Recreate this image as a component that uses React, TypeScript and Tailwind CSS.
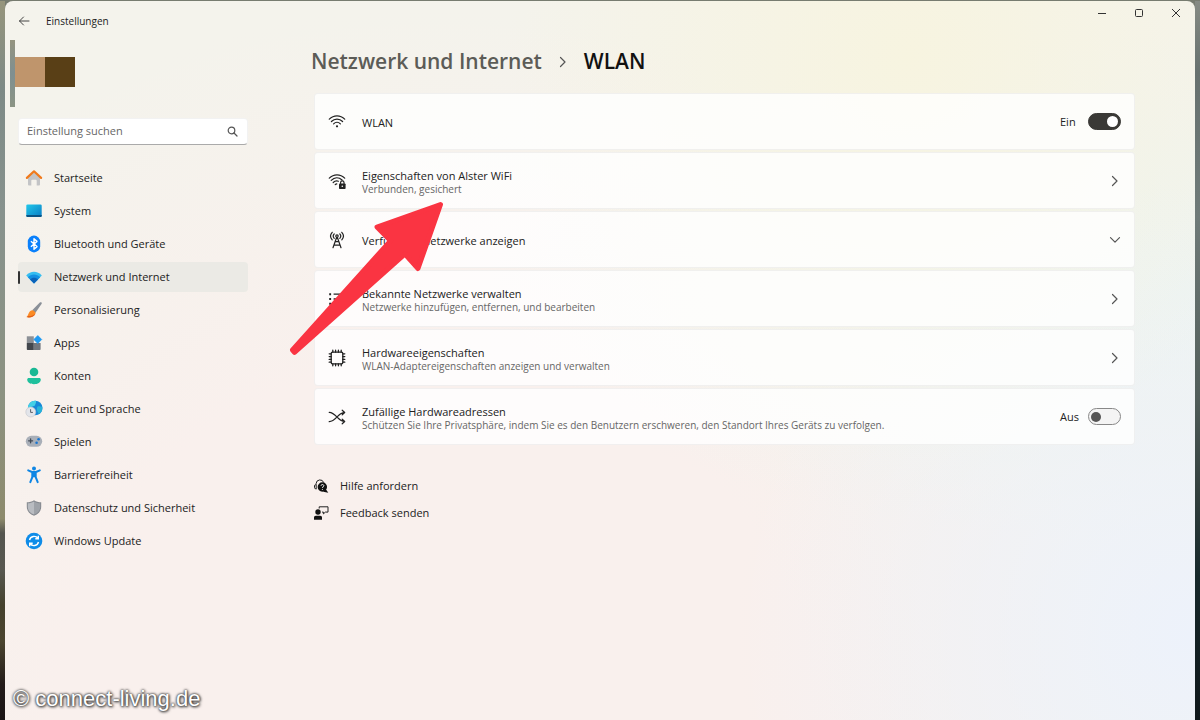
import type { ReactNode } from 'react';

const HomeIcon = () => (
    <svg width="18" height="18" viewBox="0 0 18 18">
        <path d="M3 7.5 9 2.8l6 4.7v8a.9.9 0 0 1-.9.9h-2.4v-4.6a1 1 0 0 0-1-1H7.3a1 1 0 0 0-1 1v4.6H3.9a.9.9 0 0 1-.9-.9z" fill="#c3c4c6" />
        <path d="M1.9 8.9 9 2.3l7.1 6.6" fill="none" stroke="#f07a1c" strokeWidth="2.2" strokeLinecap="round" strokeLinejoin="round" />
    </svg>
);

const SystemIcon = () => (
    <svg width="18" height="18" viewBox="0 0 18 18">
        <defs>
            <linearGradient id="screen" x1="0" y1="0" x2="1" y2="1">
                <stop offset="0" stopColor="#22c8ea" />
                <stop offset="1" stopColor="#0a7cc4" />
            </linearGradient>
        </defs>
        <rect x="1.3" y="2.5" width="15.4" height="12.4" rx="1.2" fill="url(#screen)" />
        <path d="M1.3 12.9h15.4v.8a1.2 1.2 0 0 1-1.2 1.2h-13a1.2 1.2 0 0 1-1.2-1.2z" fill="#0b5484" />
    </svg>
);

const BluetoothIcon = () => (
    <svg width="18" height="18" viewBox="0 0 18 18">
        <rect x="2.8" y=".6" width="12.4" height="16.8" rx="6.2" fill="#0a80fb" />
        <path d="m5.9 6.2 6.1 5.4-3 2.6V3.8l3 2.6-6.1 5.4" fill="none" stroke="#fff" strokeWidth="1.4" strokeLinejoin="round" />
    </svg>
);

const NetworkIcon = () => (
    <svg width="18" height="18" viewBox="0 0 18 18">
        <path d="M9 15.6 1.2 7.5C5.4 2.6 12.6 2.6 16.8 7.5z" fill="#35bdf0" />
        <path d="M9 15.6 2.8 9.200c3.400-3.600 9-3.600 12.400 0z" fill="#1490e2" />
        <path d="m9 15.6-4-4.200c2.200-2.200 5.800-2.200 8 0z" fill="#0b62b8" />
    </svg>
);

const BrushIcon = () => (
    <svg width="18" height="18" viewBox="0 0 18 18">
        <path d="M16.5 1.4c.5.4.3 1.1 0 1.6l-6.2 8.9-3.1-2.7 7.6-7.600c.5-.4 1.200-.6 1.700-.2z" fill="#8a9098" />
        <path d="M7 9.200c2 .2 3.400 1.500 3.500 3.200-1.400 3.400-5.200 4.600-9.100 3.700C3.900 14.600 3 10 7 9.200z" fill="#fb8b24" />
        <path d="M1.400 16.100c3.900.9 7.700-.3 9.100-3.700-3 2.500-5.400 3-7.500 2.500-.5.600-1 .9-1.600 1.200z" fill="#e2601a" />
    </svg>
);

const AppsIcon = () => (
    <svg width="18" height="18" viewBox="0 0 18 18">
        <path d="M1.800 2.300h7V9h-7z" fill="#8c9096" />
        <path d="M1.800 9h7v7H2.600a.8.8 0 0 1-.8-.8z" fill="#43474d" />
        <path d="M8.800 9h6.800v6.200a.8.8 0 0 1-.8.8h-6z" fill="#72777e" />
        <path d="m12.800 1.600 3.900 3.900-3.900 3.900-3.900-3.900z" fill="#1f9af2" stroke="#1f9af2" strokeWidth=".8" strokeLinejoin="round" />
    </svg>
);

const AccountIcon = () => (
    <svg width="18" height="18" viewBox="0 0 18 18">
        <circle cx="9" cy="5" r="4.300" fill="#1ab894" />
        <path d="M4 10.900h10c1.200 0 1.800.7 1.800 1.600 0 3-3 4.700-6.800 4.700s-6.800-1.700-6.800-4.700c0-.9.600-1.600 1.800-1.600z" fill="#1fc09c" />
    </svg>
);

const TimeIcon = () => (
    <svg width="18" height="18" viewBox="0 0 18 18">
        <circle cx="10.200" cy="8" r="7.300" fill="#1689d8" />
        <path d="M4 4.200A7.300 7.300 0 0 1 11 .8c.6 2-.8 3-1 4.600-1.500 1-3.500.6-4.600 2.600-1.200 0-2.300.2-2.500-.6 0-1 .4-2.200 1.100-3.200z" fill="#43cfe6" />
        <path d="M12.500 6.500c2-.6 3 0 4.700.2a7.300 7.300 0 0 1-3.200 7.300c-1.500-2-3-5-1.500-7.500z" fill="#27b3d8" />
        <circle cx="5.800" cy="12" r="5" fill="#e3e5ea" stroke="#b8bcc4" strokeWidth=".5" />
        <path d="M5.600 9.200v3.200h2.300" fill="none" stroke="#5a606a" />
    </svg>
);

const GamingIcon = () => (
    <svg width="18" height="18" viewBox="0 0 18 18">
        <rect x=".8" y="2.800" width="16.400" height="11" rx="5.500" fill="#a9afb8" />
        <path d="M5.600 5.800v4M3.600 7.800h4" stroke="#444c58" strokeWidth="1.300" strokeLinecap="round" />
        <circle cx="13.600" cy="6.300" r="1.300" fill="#1775d2" />
        <circle cx="11.600" cy="9.800" r="1.300" fill="#1775d2" />
    </svg>
);

const AccessIcon = () => (
    <svg width="18" height="18" viewBox="0 0 18 18">
        <circle cx="9" cy="2.600" r="2" fill="#0f86e4" />
        <path d="M3.200 4.300 7 6h4l3.800-1.700M9 6.300v4M7.300 6.800v4.300l-2 5M10.700 6.800v4.300l2 5" fill="none" stroke="#0f86e4" strokeWidth="2" strokeLinecap="round" strokeLinejoin="round" />
    </svg>
);

const ShieldIcon = () => (
    <svg width="18" height="18" viewBox="0 0 18 18">
        <path d="M9 1.200c2.200 1.600 4.600 2 7.200 2.100v4.500c0 4.300-2.700 7.300-7.200 8.900-4.500-1.600-7.200-4.600-7.200-8.900V3.300C4.400 3.200 6.800 2.800 9 1.200z" fill="#85898f" />
        <path d="M9 2.400c1.900 1.200 4 1.700 6.200 1.900v3.500c0 3.700-2.300 6.300-6.200 7.800z" fill="#9ea2a8" />
        <path d="M9 2.400v13.200c-3.900-1.500-6.200-4.100-6.200-7.800V4.300C5 4.100 7.100 3.600 9 2.400z" fill="#b9bcc1" />
    </svg>
);

const UpdateIcon = () => (
    <svg width="18" height="18" viewBox="0 0 18 18">
        <circle cx="9" cy="9" r="8.300" fill="#0f8ce8" />
        <path d="M4.500 8A4.700 4.700 0 0 1 13 6.500M13.500 10A4.700 4.700 0 0 1 5 11.500M13.300 3.800v3h-3M4.700 14.200v-3h3" fill="none" stroke="#fff" strokeWidth="1.400" />
    </svg>
);

const WifiIcon = () => (
    <svg width="18" height="18" viewBox="0 0 18 18" fill="none" stroke="#222" strokeWidth="1.200" strokeLinecap="round">
        <path d="M1.300 6.200c4.300-4.500 11.100-4.500 15.400 0M3.400 8.500c3.200-3.300 8-3.300 11.200 0M5.600 10.900c2-2 4.800-2 6.800 0" />
        <circle cx="9" cy="13.300" r="1.100" fill="#222" stroke="none" />
    </svg>
);

const WifiLockIcon = () => (
    <svg width="18" height="18" viewBox="0 0 18 18" fill="none" stroke="#222" strokeWidth="1.200" strokeLinecap="round">
        <path d="M1.300 6.200c4.300-4.500 11.100-4.500 15.400 0M3.200 8.400c3.200-3.300 7.600-3.400 10.900-.4M5.200 10.500c1.500-1.500 3.400-1.900 5.200-1.300M7.200 12.600c.5-.5 1-.7 1.600-.8" />
        <rect x="11" y="11.400" width="6.600" height="5.600" rx=".8" fill="#222" stroke="none" />
        <path d="M12.600 11.400v-.8a1.700 1.700 0 0 1 3.400 0v.8" />
        <circle cx="14.300" cy="14.200" r=".8" fill="#fff" stroke="none" />
    </svg>
);

const AntennaIcon = () => (
    <svg width="18" height="18" viewBox="0 0 18 18" fill="none" stroke="#222" strokeWidth="1.200" strokeLinecap="round" strokeLinejoin="round">
        <path d="M4.200 1.300c-2 2.200-2 5.300 0 7.500M13.800 1.300c2 2.200 2 5.300 0 7.500M6.200 2.900c-1.200 1.300-1.200 3.100 0 4.400M11.800 2.900c1.200 1.300 1.200 3.100 0 4.400" />
        <circle cx="9" cy="5.100" r="1.200" />
        <path d="M8.600 6.500 5 16.700M9.400 6.500 13 16.700M7.200 10.600h3.600M5.900 14.200h6.200" />
    </svg>
);

const ListIcon = () => (
    <svg width="18" height="18" viewBox="0 0 18 18" fill="none" stroke="#222" strokeWidth="1.300">
        <path d="M1.200 4.200h1.900M1.200 9h1.900M1.200 13.800h1.900" strokeWidth="1.900" />
        <path d="M5.600 4.200h11.200M5.600 9h11.200M5.600 13.800h11.200" />
    </svg>
);

const ChipIcon = () => (
    <svg width="18" height="18" viewBox="0 0 18 18" fill="none" stroke="#222" strokeWidth="1.300" strokeLinecap="round">
        <rect x="3.200" y="3.200" width="11.600" height="11.600" rx="1.200" />
        <path d="M4.800 1.200v2M7.600 1.200v2M10.400 1.200v2M13.200 1.200v2M4.800 14.800v2M7.600 14.800v2M10.400 14.800v2M13.200 14.800v2M1.200 4.800h2M1.200 7.600h2M1.200 10.400h2M1.200 13.200h2M14.800 4.800h2M14.800 7.600h2M14.800 10.400h2M14.800 13.200h2" />
    </svg>
);

const ShuffleIcon = () => (
    <svg width="18" height="18" viewBox="0 0 18 18" fill="none" stroke="#222" strokeWidth="1.200" strokeLinecap="round" strokeLinejoin="round">
        <path d="M1.200 4.300c3.600.2 5.800 2.600 7.800 4.700s3.600 4.300 7.600 4.500M1.200 13.700C4.800 13.500 7 11.100 9 9s3.600-4.300 7.600-4.500M14.200 2.200l2.500 2.300-2.500 2.300M14.200 11.200l2.500 2.300-2.500 2.300" />
    </svg>
);

const HelpIcon = () => (
    <svg width="15" height="15" viewBox="0 0 15 15">
        <path d="M2.100 9.600H1.400A1 1 0 0 1 .5 8.600V6.800a1 1 0 0 1 1-1h.6V4.600a3.900 3.900 0 0 1 7.600-1M2.200 5.800v4.500" fill="none" stroke="#222" />
        <path d="M8.400 3.300a4.700 4.700 0 1 1-.1 9.400 4.700 4.700 0 0 1 .1-9.400zm3.300 6.700 2.600 3.700-5-1z" fill="#111" />
        <path d="M7 6.800c.1-1.800 2.900-1.700 2.800 0 0 1-1.400 1-1.400 2.100M8.400 10.100v.8" fill="none" stroke="#fff" />
    </svg>
);

const FeedbackIcon = () => (
    <svg width="15" height="15" viewBox="0 0 15 15">
        <circle cx="4" cy="6" r="2.700" fill="#111" />
        <path d="M0 13.800v-2.200c0-1 .7-1.800 1.800-1.800h4.400c1.100 0 1.800.8 1.800 1.800v2.200z" fill="#111" />
        <path d="M5.200 2.500V.8H14v5.300h-2.600l-2 1.800V6.100H8" fill="none" stroke="#222" />
    </svg>
);

const Chevron = ({ down = false }: { down?: boolean }) => (
    <svg width="12" height="12" viewBox="0 0 12 12" fill="none" stroke="#555" strokeWidth="1.200" strokeLinecap="round" strokeLinejoin="round">
        <path d={down ? 'M1.500 3.700 6 8.200l4.500-4.500' : 'M3.500 1.500 8 6l-4.500 4.500'} />
    </svg>
);

const navItems = [
    { label: 'Startseite', icon: <HomeIcon /> },
    { label: 'System', icon: <SystemIcon /> },
    { label: 'Bluetooth und Geräte', icon: <BluetoothIcon /> },
    { label: 'Netzwerk und Internet', icon: <NetworkIcon />, active: true },
    { label: 'Personalisierung', icon: <BrushIcon /> },
    { label: 'Apps', icon: <AppsIcon /> },
    { label: 'Konten', icon: <AccountIcon /> },
    { label: 'Zeit und Sprache', icon: <TimeIcon /> },
    { label: 'Spielen', icon: <GamingIcon /> },
    { label: 'Barrierefreiheit', icon: <AccessIcon /> },
    { label: 'Datenschutz und Sicherheit', icon: <ShieldIcon /> },
    { label: 'Windows Update', icon: <UpdateIcon /> },
];

const cardClass = 'flex items-center w-full h-[57px] pl-[13px] pr-[13px] gap-4 rounded-sm bg-white/80 border border-black/5 text-left';

const CardText = ({ icon, title, hint }: { icon: ReactNode, title: string, hint?: string }) => (
    <>
        {icon}
        <span className="flex-1 flex flex-col pt-[2px]">
            <span className="text-[11px] leading-[15px]">{title}</span>
            {hint && <span className="text-[10px] leading-[13px] text-[#666]">{hint}</span>}
        </span>
    </>
);

const LinkCard = ({ icon, title, hint, down }: { icon: ReactNode, title: string, hint?: string, down?: boolean }) => (
    <button className={cardClass}>
        <CardText icon={icon} title={title} hint={hint} />
        <Chevron down={down} />
    </button>
);

const SwitchCard = ({ icon, title, hint, on }: { icon: ReactNode, title: string, hint?: string, on: boolean }) => (
    <label className={cardClass}>
        <CardText icon={icon} title={title} hint={hint} />
        <span className="flex items-center">
            <span className="w-7 text-[11px] leading-[15px]">{on ? 'Ein' : 'Aus'}</span>
            <input
                type="checkbox"
                role="switch"
                defaultChecked={on}
                className="appearance-none flex items-center w-[33px] h-[17px] px-[2px] rounded-full border border-[#888] bg-[#f4f4f4] before:block before:size-[10px] before:rounded-full before:bg-[#555] checked:justify-end checked:border-[#3a3936] checked:bg-[#3a3936] checked:before:size-[11px] checked:before:bg-white"
            />
        </span>
    </label>
);

const Sidebar = () => (
    <aside className="w-[243px] shrink-0 pl-[5px]">
        <div className="flex items-start h-[67px]">
            <div className="w-[5px] h-full bg-linear-to-b from-[#94947f] via-[#7f8f90] to-[#8b9484]" />
            <div className="flex mt-[17px]">
                <div className="size-[30px] bg-[#bf956c]" />
                <div className="size-[30px] bg-[#593f16]" />
            </div>
        </div>

        <div className="pl-2">
            <div className="flex items-center h-[27px] mt-[11px] px-2 rounded-sm bg-white border border-black/5 border-b-[#aaa]">
                <input type="search" aria-label="Einstellung suchen" placeholder="Einstellung suchen" className="flex-1 min-w-0 bg-transparent text-[11px] outline-none placeholder:text-[#666]" />
                <svg width="12" height="12" viewBox="0 0 12 12" fill="none" stroke="#555" strokeWidth="1.200" strokeLinecap="round">
                    <circle cx="4.500" cy="4.500" r="3.300" />
                    <path d="m7 7 3 3" />
                </svg>
            </div>

            <nav className="mt-[18px]">
                <ul className="flex flex-col gap-[3px]">
                    {navItems.map((item) => (
                        <li key={item.label}>
                            <a href="#" className={item.active ? 'flex items-center h-[30px] rounded bg-[#ebeae5]' : 'flex items-center h-[30px] rounded'}>
                                <span className={item.active ? 'w-[2px] h-[13px] rounded-full bg-[#333]' : 'w-[2px]'} />
                                <span className="pl-[5px] pr-[11px]">{item.icon}</span>
                                <span className="text-[11px]">{item.label}</span>
                            </a>
                        </li>
                    ))}
                </ul>
            </nav>
        </div>
    </aside>
);

const Arrow = () => (
    <svg className="absolute left-[284px] top-[200px] pointer-events-none" width="162" height="158" viewBox="284 200 162 158">
        <path d="M440.500 204.500 377 227l13.500 13.800L292.500 350l2 2.300L405 254l13 14.500z" fill="#fa3442" stroke="#fa3442" strokeWidth="5" strokeLinejoin="round" />
    </svg>
);

export default function App() {
    return (
        <div className="relative flex min-h-screen pt-px overflow-hidden bg-[#777c70] font-['Open_Sans','Noto_Sans',sans-serif] text-[#222]">
            <div className="w-[5px] shrink-0 bg-[linear-gradient(#96957c,#7d8a86_12%,#87928d_29%,#8c9281_55%,#8d8a6c_72%,#55554f_74%,#585850_79%,#45412d_84%,#4b452f_89%,#241c1a_95%,#1a1414)]" />

            <div className="flex-1 min-w-0 flex flex-col rounded-t-lg bg-[radial-gradient(circle_at_76%_8%,#f7f4e0,transparent_36%),radial-gradient(circle_at_100%_88%,#edf2fb,transparent_34%),radial-gradient(ellipse_at_100%_40%,#edf4f0,transparent_42%),radial-gradient(ellipse_at_36%_100%,#f9f0ed_35%,transparent_70%)] bg-[#f4f3ec]">
                <header className="flex items-start justify-between h-[39px] pr-px">
                    <div className="flex items-center h-10 pl-[13px]">
                        <button aria-label="Zurück" className="w-7">
                            <svg width="12" height="12" viewBox="0 0 12 12" fill="none" stroke="#444" strokeLinecap="round" strokeLinejoin="round">
                                <path d="M11 6H1.500M5.500 2l-4 4 4 4" />
                            </svg>
                        </button>
                        <span className="text-[10px]">Einstellungen</span>
                    </div>
                    <div className="flex items-center h-6">
                        <button aria-label="Minimieren" className="w-[37px] flex justify-center">
                            <svg width="10" height="10" viewBox="0 0 10 10" stroke="#333"><path d="M1 5.500h8" /></svg>
                        </button>
                        <button aria-label="Maximieren" className="w-[37px] flex justify-center">
                            <svg width="10" height="10" viewBox="0 0 10 10" fill="none" stroke="#333"><rect x="1.500" y="1.500" width="7" height="7" rx="1" /></svg>
                        </button>
                        <button aria-label="Schließen" className="w-[37px] flex justify-center">
                            <svg width="10" height="10" viewBox="0 0 10 10" stroke="#333"><path d="m1 1 8 8M9 1 1 9" /></svg>
                        </button>
                    </div>
                </header>

                <div className="flex flex-1">
                    <Sidebar />

                    <main className="flex-1 min-w-0 pl-[66px] pr-[60px]">
                        <h1 className="flex items-center h-11 -ml-[3px] gap-[15px] text-[21px] font-semibold">
                            <a href="#" className="text-[#5c5c57]">Netzwerk und Internet</a>
                            <Chevron />
                            <span className="text-[#111]">WLAN</span>
                        </h1>

                        <section className="flex flex-col gap-[2px] mt-[9px]">
                            <SwitchCard icon={<WifiIcon />} title="WLAN" on={true} />
                            <LinkCard icon={<WifiLockIcon />} title="Eigenschaften von Alster WiFi" hint="Verbunden, gesichert" />
                            <LinkCard icon={<AntennaIcon />} title="Verfügbare Netzwerke anzeigen" down />
                            <LinkCard icon={<ListIcon />} title="Bekannte Netzwerke verwalten" hint="Netzwerke hinzufügen, entfernen, und bearbeiten" />
                            <LinkCard icon={<ChipIcon />} title="Hardwareeigenschaften" hint="WLAN-Adaptereigenschaften anzeigen und verwalten" />
                            <SwitchCard icon={<ShuffleIcon />} title="Zufällige Hardwareadressen" hint="Schützen Sie Ihre Privatsphäre, indem Sie es den Benutzern erschweren, den Standort Ihres Geräts zu verfolgen." on={false} />
                        </section>

                        <ul className="mt-7 text-[11px]">
                            <li>
                                <a href="#" className="flex items-center h-[27px] gap-[11px]"><HelpIcon />Hilfe anfordern</a>
                            </li>
                            <li>
                                <a href="#" className="flex items-center h-[27px] gap-[11px]"><FeedbackIcon />Feedback senden</a>
                            </li>
                        </ul>
                    </main>
                </div>
            </div>

            <div className="w-[5px] shrink-0 bg-[linear-gradient(#868b84,#67716f_10%,#6f7b79_30%,#525e5a_55%,#33403e_68%,#16282b_80%,#10181b)]" />

            <Arrow />
            <p className="absolute left-[13px] bottom-[9px] font-['Liberation_Sans',sans-serif] text-[22px] leading-6 text-white [text-shadow:0_0_3px_#333,1px_1px_3px_#444,0_0_2px_#555]">© connect-living.de</p>
        </div>
    );
}
